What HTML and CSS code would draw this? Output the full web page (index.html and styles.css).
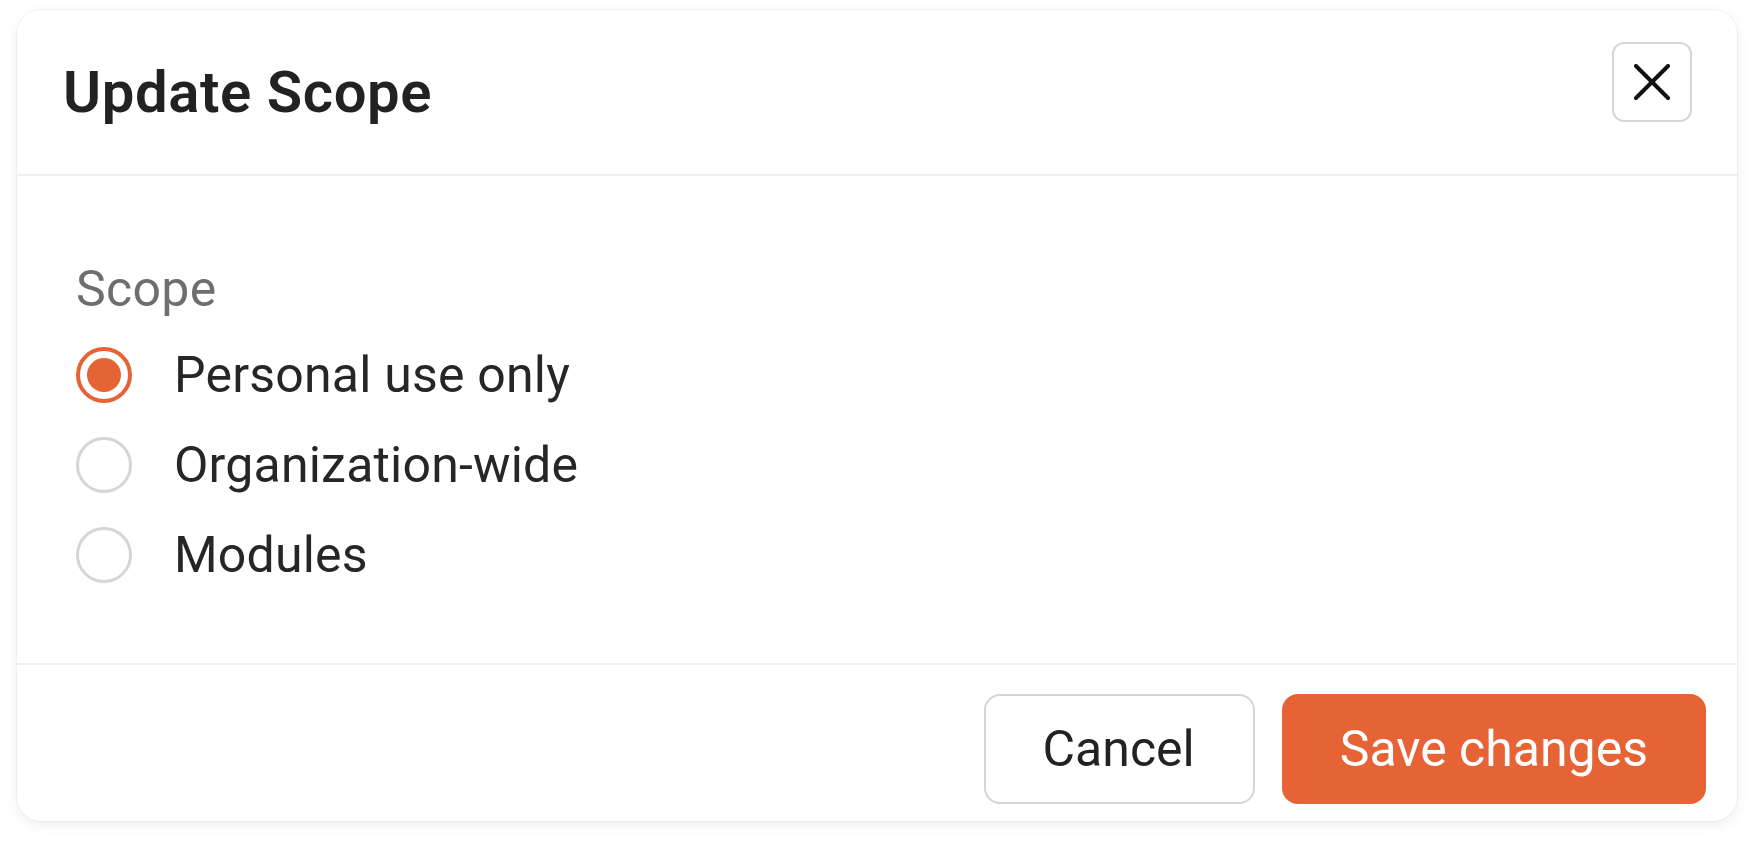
FILE: index.html
```html
<!DOCTYPE html>
<html lang="en">
<head>
<meta charset="utf-8">
<title>Update Scope</title>
<link rel="stylesheet" href="styles.css">
</head>
<body>
<div class="modal" role="dialog" aria-labelledby="modal-title">
  <header class="modal-header">
    <h1 class="modal-title" id="modal-title">Update Scope</h1>
    <button class="close-btn" type="button" aria-label="Close">
      <svg width="36" height="36" viewBox="0 0 36 36" aria-hidden="true">
        <path d="M2 2 L34 34 M34 2 L2 34" stroke="#111" stroke-width="4" stroke-linecap="round" fill="none"/>
      </svg>
    </button>
  </header>
  <section class="modal-body">
    <div class="field-label">Scope</div>
    <div class="radio-group" role="radiogroup">
      <label class="radio-row">
        <span class="radio checked"><span class="radio-dot"></span></span>
        <span class="radio-text">Personal use only</span>
      </label>
      <label class="radio-row">
        <span class="radio"></span>
        <span class="radio-text">Organization-wide</span>
      </label>
      <label class="radio-row">
        <span class="radio"></span>
        <span class="radio-text">Modules</span>
      </label>
    </div>
  </section>
  <footer class="modal-footer">
    <button class="btn btn-secondary" type="button">Cancel</button>
    <button class="btn btn-primary" type="button">Save changes</button>
  </footer>
</div>
</body>
</html>
```

FILE: styles.css
```css
* {
  box-sizing: border-box;
}

html, body {
  background: #ffffff;
}

body {
  margin: 0;
  padding: 10px 15px 22px 17px;
  font-family: Roboto, "Liberation Sans", Arial, sans-serif;
  color: #222222;
}

.modal {
  width: 1720px;
  background: #ffffff;
  border-radius: 24px;
  box-shadow: 0 0 0 1px rgba(0, 0, 0, 0.035), 0 4px 14px rgba(0, 0, 0, 0.07);
  display: flex;
  flex-direction: column;
  overflow: hidden;
}

.modal-header {
  height: 166px;
  padding: 32px 45px 0 46px;
  display: flex;
  align-items: flex-start;
  justify-content: space-between;
  border-bottom: 2px solid #efefef;
}

.modal-title {
  margin: 16px 0 0 0;
  font-size: 58px;
  line-height: 68px;
  font-weight: 600;
  color: #222222;
  letter-spacing: 0.6px;
}

.close-btn {
  width: 80px;
  height: 80px;
  padding: 0;
  border: 2px solid #d6d6d6;
  border-radius: 12px;
  background: #ffffff;
  display: flex;
  align-items: center;
  justify-content: center;
}

.modal-body {
  padding: 83px 0 63px 59px;
}

.field-label {
  font-size: 50px;
  line-height: 60px;
  color: #6e6e6e;
  margin-bottom: 11px;
  letter-spacing: 0.3px;
}

.radio-group {
  display: flex;
  flex-direction: column;
}

.radio-row {
  height: 90px;
  display: flex;
  align-items: center;
  gap: 42px;
}

.radio {
  width: 56px;
  height: 56px;
  border-radius: 50%;
  border: 3px solid #d5d5d5;
  display: flex;
  align-items: center;
  justify-content: center;
  flex: none;
}

.radio.checked {
  border: 4px solid #e66335;
}

.radio-dot {
  width: 34px;
  height: 34px;
  border-radius: 50%;
  background: #e66335;
}

.radio-text {
  font-size: 50px;
  line-height: 60px;
  color: #262626;
  letter-spacing: 0.2px;
}

.modal-footer {
  border-top: 2px solid #efefef;
  padding: 29px 31px 17px 0;
  display: flex;
  justify-content: flex-end;
  gap: 27px;
}

.btn {
  height: 110px;
  padding: 0 56px;
  border-radius: 16px;
  font-family: Roboto, "Liberation Sans", Arial, sans-serif;
  font-size: 50px;
  line-height: 60px;
  display: flex;
  align-items: center;
  justify-content: center;
}

.btn-secondary {
  background: #ffffff;
  border: 2px solid #d4d4d4;
  color: #222222;
  padding: 0 58px 0 57px;
}

.btn-primary {
  background: #e66335;
  border: 2px solid #e66335;
  color: #ffffff;
}
```
